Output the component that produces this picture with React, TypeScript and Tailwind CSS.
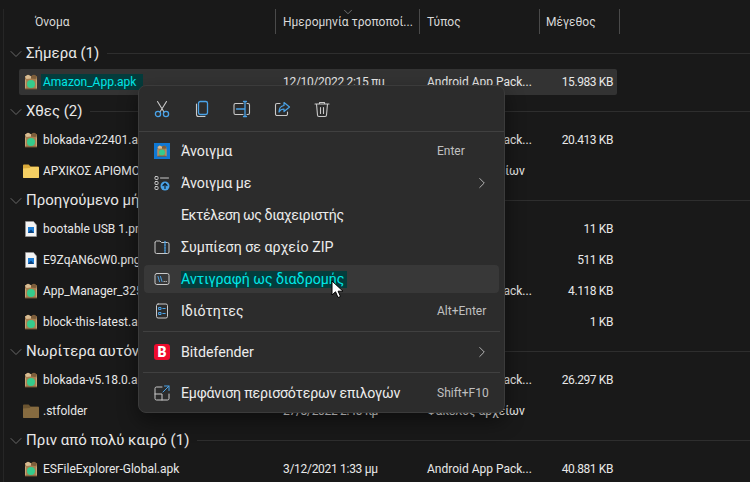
import { ChevronDown, ChevronRight } from "lucide-react";

type Row = {
  name: string;
  date?: string;
  type?: string;
  size?: string;
  icon: "apk" | "folder" | "brown" | "png";
  selected?: boolean;
};

type Group = { title: string; rows: Row[] };

const APK = "Android App Pack...";
const DIR = "Φάκελος αρχείων";

const groups: Group[] = [
  {
    title: "Σήμερα (1)",
    rows: [{ name: "Amazon_App.apk", date: "12/10/2022 2:15 πμ", type: APK, size: "15.983 KB", icon: "apk", selected: true }],
  },
  {
    title: "Χθες (2)",
    rows: [
      { name: "blokada-v22401.apk", type: APK, size: "20.413 KB", icon: "apk" },
      { name: "ΑΡΧΙΚΟΣ ΑΡΙΘΜΟΣ", type: DIR, icon: "folder" },
    ],
  },
  {
    title: "Προηγούμενο μήνα (4)",
    rows: [
      { name: "bootable USB 1.png", size: "11 KB", icon: "png" },
      { name: "E9ZqAN6cW0.png", size: "511 KB", icon: "png" },
      { name: "App_Manager_325.apk", type: APK, size: "4.118 KB", icon: "apk" },
      { name: "block-this-latest.apk", size: "1 KB", icon: "apk" },
    ],
  },
  {
    title: "Νωρίτερα αυτόν τον χρόνο (2)",
    rows: [
      { name: "blokada-v5.18.0.apk", type: APK, size: "26.297 KB", icon: "apk" },
      { name: ".stfolder", date: "27/8/2022 2:45 πμ", type: DIR, icon: "brown" },
    ],
  },
  {
    title: "Πριν από πολύ καιρό (1)",
    rows: [{ name: "ESFileExplorer-Global.apk", date: "3/12/2021 1:33 μμ", type: APK, size: "40.881 KB", icon: "apk" }],
  },
];

function ApkIcon() {
  return (
    <svg width="16" height="16" viewBox="0 0 16 16" className="shrink-0">
      <path d="M2 2.5 5 .8 8 2.2 11 .8 14 2.5V15H2Z" fill="#a67f52" />
      <path d="M2 2.5 5 .8 8 2.2V4.5L3.5 5Z" fill="#d8bd94" />
      <path d="M14 2.5 11 .8 8 2.2V4.5L12.5 5Z" fill="#7c5d3a" />
      <path d="M2.6 5.5V15M13.4 5.5V15" stroke="#c9a878" />
      <circle cx="8" cy="10" r="4" fill="#35cb8c" />
      <path d="M2 15h12" stroke="#6d5233" />
    </svg>
  );
}

function FileIcon({ icon }: { icon: Row["icon"] }) {
  if (icon === "apk") return <ApkIcon />;
  if (icon === "png")
    return (
      <svg width="16" height="16" viewBox="0 0 16 16" className="shrink-0">
        <path d="M2.5 .5h8L13.5 4v11.5h-11Z" fill="#f4f4f4" stroke="#9a9a9a" strokeWidth=".6" />
        <rect x="5" y="6" width="6" height="6" fill="#1f7fd6" />
        <path d="M5 12 8 8.5 11 12Z" fill="#0c3f7a" />
      </svg>
    );
  const c = icon === "folder" ? ["#d9a93a", "#f4cf63"] : ["#6b5430", "#866b40"];
  return (
    <svg width="16" height="14" viewBox="0 0 17 14" className="shrink-0" preserveAspectRatio="none">
      <path d="M0 1.5A1 1 0 0 1 1 .5h5L8 2.5h8a1 1 0 0 1 1 1V13a1 1 0 0 1-1 1H1a1 1 0 0 1-1-1Z" fill={c[0]} />
      <path d="M0 4.5 7 4 8 3h8a1 1 0 0 1 1 1v9a1 1 0 0 1-1 1H1a1 1 0 0 1-1-1Z" fill={c[1]} />
    </svg>
  );
}

function ToolIcon({ children }: { children: React.ReactNode }) {
  return (
    <svg width="18" height="18" viewBox="0 0 18 18" fill="none" strokeWidth="1.1" strokeLinecap="round" strokeLinejoin="round">
      {children}
    </svg>
  );
}

const blue = "#4aa3e8";
const gray = "#c9c9c9";

function Toolbar() {
  return (
    <div className="flex h-[45px] items-center gap-[22px] pl-[14px]">
      <ToolIcon>
        <g stroke={gray}>
          <path d="M4.5 1.5 11 12M13.5 1.5 7 12" />
        </g>
        <g stroke={blue} strokeWidth="1.3">
          <circle cx="5" cy="14" r="2.6" />
          <circle cx="13" cy="14" r="2.6" />
        </g>
      </ToolIcon>
      <ToolIcon>
        <rect x="5.5" y="1.5" width="9" height="13" rx="1.8" stroke={blue} strokeWidth="1.3" />
        <path d="M3.5 4v10.5a2 2 0 0 0 2 2h6.5" stroke={gray} />
      </ToolIcon>
      <ToolIcon>
        <path d="M10 3.5H2.5A1.5 1.5 0 0 0 1 5v8a1.5 1.5 0 0 0 1.5 1.5H10M14 3.5h1A1.5 1.5 0 0 1 16.5 5v8a1.5 1.5 0 0 1-1.5 1.5h-1" stroke={gray} />
        <path d="M12 1.5v15M10.5 1.5h3M10.5 16.5h3M3.5 9H12" stroke={blue} strokeWidth="1.3" />
      </ToolIcon>
      <ToolIcon>
        <path d="M7 3.5H4A1.5 1.5 0 0 0 2.5 5v9A1.5 1.5 0 0 0 4 15.5h9a1.5 1.5 0 0 0 1.5-1.5v-2" stroke={gray} />
        <path d="M11 2.5 16.5 7 11 11.5V9C8.5 9 7 10 6 12c0-3.5 2-6 5-6.5Z" stroke={blue} strokeWidth="1.2" />
      </ToolIcon>
      <ToolIcon>
        <g stroke={gray}>
          <path d="M2 4h14M6.5 4V2.5h5V4M3.5 4l1 11a1.5 1.5 0 0 0 1.5 1.5h6a1.5 1.5 0 0 0 1.5-1.5l1-11M7.5 7.5v6M10.5 7.5v6" />
        </g>
      </ToolIcon>
    </div>
  );
}

function MenuIcon({ name }: { name: string }) {
  const svg = (c: React.ReactNode) => (
    <svg width="16" height="16" viewBox="0 0 16 16" fill="none" strokeWidth="1" strokeLinecap="round" strokeLinejoin="round">
      {c}
    </svg>
  );
  switch (name) {
    case "open":
      return (
        <div className="flex h-4 w-4 items-center justify-center bg-[#0f78d4]">
          <div className="scale-75">
            <ApkIcon />
          </div>
        </div>
      );
    case "with":
      return svg(
        <>
          <rect x="1" y="1.5" width="3" height="3" rx=".6" stroke={gray} />
          <rect x="1" y="6.5" width="3" height="3" rx=".6" stroke={gray} />
          <rect x="1" y="11.5" width="3" height="3" rx=".6" stroke={gray} />
          <path d="M6.5 3h8" stroke={gray} />
          <circle cx="11" cy="11" r="4.5" fill={blue} />
          <path d="M11 13.5v-4.5M9 10.5 11 8.5 13 10.5" stroke="#10202c" strokeWidth="1.2" />
        </>
      );
    case "zip":
      return svg(
        <>
          <path d="M1 4v9a1.5 1.5 0 0 0 1.5 1.5h11A1.5 1.5 0 0 0 15 13V5a1.5 1.5 0 0 0-1.5-1.5H7.5L6 2H2.5A1.5 1.5 0 0 0 1 3.5Z" stroke={gray} />
          <path d="M11 2.5v11" stroke={blue} strokeWidth="1.4" strokeDasharray="1.5 1.2" />
        </>
      );
    case "path":
      return svg(
        <>
          <rect x="1" y="2.5" width="14" height="11" rx="1.8" stroke={gray} />
          <path d="M4 5.5 5.5 10.5M6.5 5.5 8 10.5" stroke={blue} />
          <path d="M10 10.5h.4M12 10.5h.4" stroke={gray} />
        </>
      );
    case "props":
      return svg(
        <>
          <rect x="2.5" y="1" width="11" height="14" rx="1.6" stroke={gray} />
          <rect x="5" y="4.5" width="2" height="2" stroke={blue} />
          <rect x="5" y="9.5" width="2" height="2" stroke={blue} />
          <path d="M8.8 5.5h2.4M8.8 10.5h2.4" stroke={blue} />
        </>
      );
    case "bd":
      return (
        <div className="flex h-4 w-4 items-center justify-center rounded-[3px] bg-[#ee0b2d] text-[14px] leading-none font-black text-white">
          B
        </div>
      );
    case "more":
      return svg(
        <>
          <path d="M8 2H2.5A1.5 1.5 0 0 0 1 3.5v10A1.5 1.5 0 0 0 2.5 15h11a1.5 1.5 0 0 0 1.5-1.5V9" stroke={gray} />
          <path d="M1 9h7v6" stroke={gray} />
          <path d="M9 7 15 1M10.5 1H15V5.5" stroke={blue} />
        </>
      );
    default:
      return null;
  }
}

function MenuItem({
  icon,
  label,
  shortcut,
  arrow,
  active,
  tight,
}: {
  icon?: string;
  label: string;
  shortcut?: string;
  arrow?: boolean;
  active?: boolean;
  tight?: string;
}) {
  return (
    <div className="flex h-8 items-center px-[5px] py-[2px]">
      <div className={`flex h-full w-full items-center rounded-[4px] pl-[10px] ${active ? "bg-[#383838]" : ""}`}>
        <div className="flex w-4 justify-center">{icon && <MenuIcon name={icon} />}</div>
        <span
          className={`ml-[11px] text-[14.2px] leading-[17px] ${tight ?? ""} ${
            active ? "bg-[#043c3c] pr-[2px] text-[#00e6e6]" : "text-[#ececec]"
          }`}
        >
          {label}
        </span>
        {shortcut && <span className="absolute left-[298px] text-[12px] text-[#c0c0c0]">{shortcut}</span>}
        {arrow && <ChevronRight size={18} strokeWidth={1.1} className="absolute left-[334px] text-[#cfcfcf]" />}
      </div>
    </div>
  );
}

function ContextMenu() {
  return (
    <div className="absolute top-[85px] left-[138px] flex h-[328px] w-[367px] flex-col rounded-lg border border-[#3b3b3b] bg-[#2c2c2c] shadow-[0_8px_20px_rgba(0,0,0,0.45)]">
      <Toolbar />
      <div className="h-px bg-[#404040]" />
      <div className="pt-[3px] pb-1">
        <MenuItem icon="open" label="Άνοιγμα" shortcut="Enter" />
        <MenuItem icon="with" label="Άνοιγμα με" arrow />
        <MenuItem label="Εκτέλεση ως διαχειριστής" tight="tracking-[-0.45px]" />
        <MenuItem icon="zip" label="Συμπίεση σε αρχείο ZIP" />
        <MenuItem icon="path" label="Αντιγραφή ως διαδρομής" active />
        <MenuItem icon="props" label="Ιδιότητες" shortcut="Alt+Enter" />
      </div>
      <div className="mx-1 h-px bg-[#404040]" />
      <div className="py-1">
        <MenuItem icon="bd" label="Bitdefender" arrow />
      </div>
      <div className="mx-1 h-px bg-[#404040]" />
      <div className="pt-1 pb-[3px]">
        <MenuItem icon="more" label="Εμφάνιση περισσότερων επιλογών" shortcut="Shift+F10" tight="tracking-[-0.2px]" />
      </div>
    </div>
  );
}

function FileRow({ row }: { row: Row }) {
  return (
    <div className="flex h-[31px] items-center pl-[19px] text-[12px] text-[#e8e8e8]">
      <div className={`flex h-[26px] w-[598px] items-center rounded-[2px] ${row.selected ? "bg-[#333333]" : ""}`}>
        <div className="flex w-[22px] justify-end pr-[2px]">
          <FileIcon icon={row.icon} />
        </div>
        <div className="w-[242px]">
          <span className={`inline-block pl-[2px] leading-[16px] ${row.selected ? "bg-[#043c3c] pr-[7px] text-[#00e6e6]" : ""}`}>
            {row.name}
          </span>
        </div>
        <div className="w-[144px] tracking-[-0.3px] whitespace-nowrap">{row.date}</div>
        <div className="w-[130px] whitespace-nowrap">{row.type}</div>
        <div className="w-[56px] text-right tracking-[-0.4px] whitespace-nowrap">{row.size}</div>
      </div>
    </div>
  );
}

function GroupBlock({ group }: { group: Group }) {
  return (
    <div>
      <div className="flex h-[27px] items-center pt-[2px] pl-[6px]">
        <ChevronDown size={20} strokeWidth={1.1} className="text-[#6e6e6e]" />
        <span className="text-[15px] whitespace-nowrap text-[#e8e8e8]">{group.title}</span>
        <div className="ml-2 h-px flex-1 bg-[#2e2e2e]" />
      </div>
      {group.rows.map((r) => (
        <FileRow key={r.name} row={r} />
      ))}
    </div>
  );
}

function Header() {
  const cols = [
    { label: "Όνομα", w: "w-[241px]", pad: "" },
    { label: "Ημερομηνία τροποποί...", w: "w-[144px]", pad: "pl-[7px]" },
    { label: "Τύπος", w: "w-[120px]", pad: "pl-[7px]" },
    { label: "Μέγεθος", w: "w-[80px]", pad: "pl-[6px]" },
  ];
  return (
    <div className="flex h-[39px] items-start pt-[9px] pl-[35px]">
      {cols.map((c) => (
        <div
          key={c.label}
          className={`flex h-[25px] items-center border-r border-[#4a4a4a] text-[12px] whitespace-nowrap text-[#d8d8d8] ${c.w} ${c.pad}`}
        >
          {c.label}
        </div>
      ))}
    </div>
  );
}

function Cursor() {
  return (
    <svg width="13" height="19" viewBox="0 0 13 19" className="absolute top-[280px] left-[331px]">
      <path d="M1 1v14l3.5-3.2L7 17.5l2.5-1-2.4-5.3H12Z" fill="#fff" stroke="#000" strokeWidth="1" />
    </svg>
  );
}

export default function App() {
  return (
    <div className="relative h-[482px] w-[750px] overflow-hidden bg-[#191919] font-['Roboto',sans-serif]">
      <div className="absolute top-[9px] bottom-0 left-[3px] w-px bg-[#262626]" />
      <Header />
      <ChevronDown size={14} strokeWidth={1.1} className="absolute top-[5px] left-[341px] text-[#a0a0a0]" />
      {groups.map((g) => (
        <GroupBlock key={g.title} group={g} />
      ))}
      <ContextMenu />
      <Cursor />
    </div>
  );
}
